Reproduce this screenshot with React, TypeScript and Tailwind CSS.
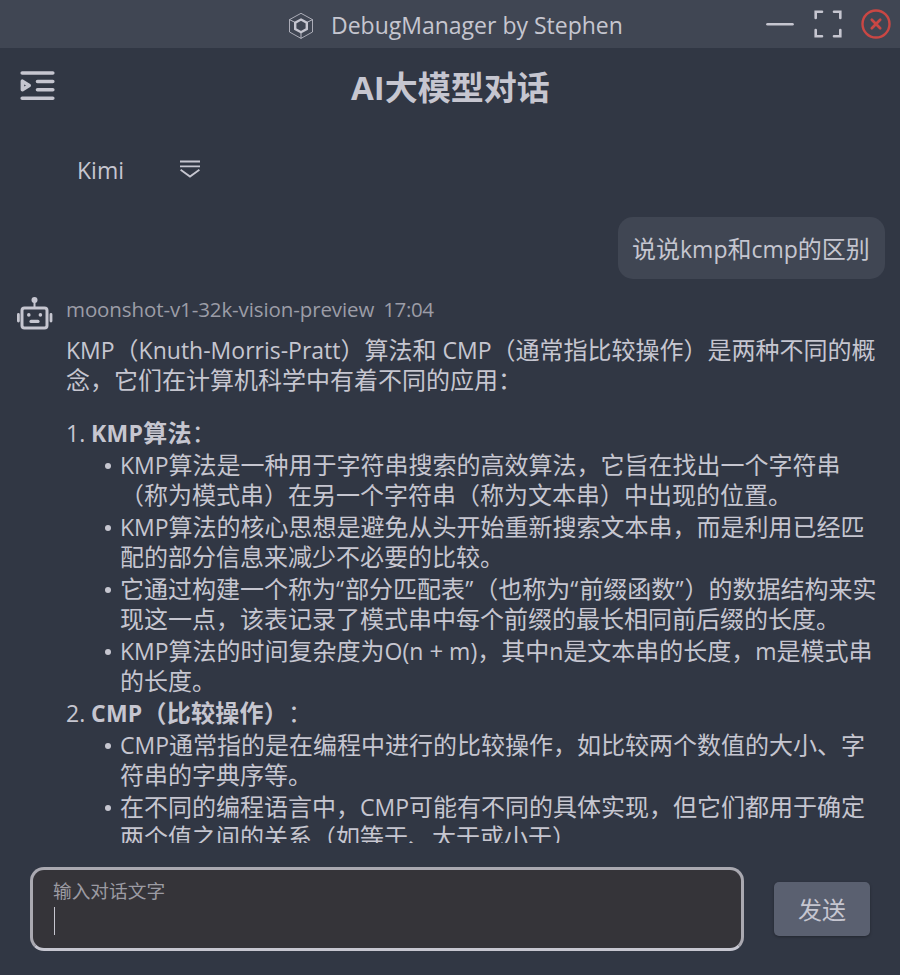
import React from "react";

const RUNS = /( \+ |[\u201c\u201d]|[\x20-\x2a\x2c-\x7e]+)/;

function runClass(part: string) {
  if (part === " + ") return "text-[23px] tracking-[1px] whitespace-pre";
  if (part === "\u201c" || part === "\u201d") return "text-[23px] tracking-[1.1px]";
  return "text-[23px] whitespace-pre";
}

/* Latin runs are set slightly smaller than the Han glyphs around them. */
function Mixed({ text }: { text: string }) {
  return (
    <>
      {text.split(RUNS).map((part, i) =>
        i % 2 === 1 ? (
          <span key={i} className={runClass(part)}>
            {part}
          </span>
        ) : (
          part
        ),
      )}
    </>
  );
}

function Lines({ lines }: { lines: string[] }) {
  return (
    <div>
      {lines.map((line) => (
        <div key={line} className="h-[30px] whitespace-nowrap leading-[28px]">
          <Mixed text={line} />
        </div>
      ))}
    </div>
  );
}

function Bullet({ lines }: { lines: string[] }) {
  return (
    <li className="flex">
      <span className="mt-[12px] mr-[9px] h-[6px] w-[6px] shrink-0 rounded-full bg-[#c6c6d0]" />
      <Lines lines={lines} />
    </li>
  );
}

function Section({ index, title, items }: { index: string; title: string; items: string[][] }) {
  return (
    <li className="flex flex-col gap-[2px]">
      <div className="flex h-[30px] whitespace-nowrap leading-[28px]">
        <span className="w-[25px] text-[23px]">{index}</span>
        <strong className="font-bold tracking-[0.25px]">
          <Mixed text={title} />
        </strong>
        <span>：</span>
      </div>
      <ul className="flex flex-col gap-[2px] pl-[39px]">
        {items.map((lines) => (
          <Bullet key={lines[0]} lines={lines} />
        ))}
      </ul>
    </li>
  );
}

const sections = [
  {
    index: "1.",
    title: "KMP算法",
    items: [
      ["KMP算法是一种用于字符串搜索的高效算法，它旨在找出一个字符串", "（称为模式串）在另一个字符串（称为文本串）中出现的位置。"],
      ["KMP算法的核心思想是避免从头开始重新搜索文本串，而是利用已经匹", "配的部分信息来减少不必要的比较。"],
      ["它通过构建一个称为“部分匹配表”（也称为“前缀函数”）的数据结构来实", "现这一点，该表记录了模式串中每个前缀的最长相同前后缀的长度。"],
      ["KMP算法的时间复杂度为O(n + m)，其中n是文本串的长度，m是模式串", "的长度。"],
    ],
  },
  {
    index: "2.",
    title: "CMP（比较操作）",
    items: [
      ["CMP通常指的是在编程中进行的比较操作，如比较两个数值的大小、字", "符串的字典序等。"],
      ["在不同的编程语言中，CMP可能有不同的具体实现，但它们都用于确定", "两个值之间的关系（如等于、大于或小于）"],
    ],
  },
];

function TitleBar() {
  return (
    <header className="flex h-12 shrink-0 items-center bg-[#404653] pl-[288px]">
      <svg width="26" height="28" viewBox="0 0 26 28" fill="none" stroke="#c6c6d0" className="mt-[3px]">
        <path d="M13 1.3 24.5 7.6V20L13 26.4 1.5 20V7.6Z" strokeWidth="0.8" />
        <path d="M1.5 7.6 7 10.4M24.5 7.6 19 10.4M13 20.5v6" strokeWidth="0.9" />
        <path d="M13 7.5 18.8 10.6V17L13 20.2 7.2 17V10.6Z" strokeWidth="2.4" />
      </svg>
      <h1 className="ml-[17px] mt-[1px] w-[437px] whitespace-nowrap text-[23px] leading-[30px]">DebugManager by Stephen</h1>
      <svg width="28" height="48" viewBox="0 0 28 48" stroke="#c6c6d0" strokeWidth="2.6" strokeLinecap="round" className="-ml-[2px]">
        <path d="M1.5 24.2H26.5" />
      </svg>
      <svg width="28" height="28" viewBox="0 0 28 28" fill="none" stroke="#c6c6d0" strokeWidth="2.6" strokeLinecap="round" className="ml-5">
        <path d="M1.7 8V1.7H8M20 1.7h6.3V8M1.7 20v6.3H8M26.3 20v6.3H20" />
      </svg>
      <svg width="30" height="30" viewBox="0 0 30 30" fill="none" stroke="#c94744" strokeWidth="2.4" strokeLinecap="round" className="ml-[19px]">
        <circle cx="15" cy="15" r="13.5" />
        <path d="m10.8 10.8 8.4 8.4M19.2 10.8l-8.4 8.4" strokeWidth="2.7" />
      </svg>
    </header>
  );
}

function RobotIcon() {
  return (
    <svg width="36" height="34" viewBox="0 0 36 34" fill="none" stroke="#c6c6d0" strokeLinecap="round" className="mt-[0px] shrink-0">
      <rect x="5" y="12" width="25" height="20" rx="2.5" strokeWidth="3" />
      <path d="M17.5 5v6" strokeWidth="2" />
      <circle cx="17.5" cy="4" r="3" fill="#c6c6d0" stroke="none" />
      <path d="M1.4 18.5v6.5M34 18.5v6.5" strokeWidth="2.8" />
      <circle cx="11.8" cy="18.9" r="1.8" fill="#c6c6d0" stroke="none" />
      <circle cx="23.4" cy="18.9" r="1.8" fill="#c6c6d0" stroke="none" />
      <path d="M14 25.4h7" strokeWidth="3.2" />
    </svg>
  );
}

export default function App() {
  return (
    <div className="flex h-[975px] w-[900px] flex-col overflow-hidden bg-[#313744] text-2xl text-[#c6c6d0] [font-family:'Open_Sans','Noto_Sans_CJK_SC',sans-serif] [text-spacing-trim:space-all]">
      <TitleBar />

      <div className="flex h-[80px] shrink-0 items-center pl-5">
        <svg width="35" height="30" viewBox="0 0 35 30" fill="none" stroke="#c6c6d0" strokeWidth="3.6" strokeLinecap="round" strokeLinejoin="round" className="-mt-[5px]">
          <path d="M2.2 2H32.8M17.5 10.5H32.8M17.5 18.8H32.8M2.2 27.3H32.8" />
          <path d="M2.4 10.2V18.8L9.2 14.5Z" />
        </svg>
        <h2 className="ml-[296px] whitespace-nowrap text-[33px] font-bold leading-[44px]">AI大模型对话</h2>
      </div>

      <div className="flex h-[89px] shrink-0 pl-[77px] pt-[27px]">
        <span className="w-[103px] text-[23px] leading-[30px]">Kimi</span>
        <svg width="20" height="19" viewBox="0 0 20 19" fill="none" stroke="#c6c6d0" strokeWidth="1.8" className="mt-[5px]">
          <path d="M0 1.5H20M0 6.4H20M0.6 9.8 10 16.6 19.4 9.8" />
        </svg>
      </div>

      <div className="mr-[15px] flex h-[62px] w-[267px] shrink-0 items-center self-end whitespace-nowrap rounded-[15px] bg-[#404653] pl-[14px] leading-[30px]">
        <div className="mt-[2px]">
          <Mixed text="说说kmp和cmp的区别" />
        </div>
      </div>

      <main className="mt-[17px] flex h-[547px] shrink-0 overflow-hidden pl-[17px]">
        <RobotIcon />
        <div className="ml-[13px]">
          <div className="flex h-[30px] gap-[9px] whitespace-nowrap text-[20.5px] leading-[26px] text-[#9c9da7]">
            <span className="tracking-[-0.1px]">moonshot-v1-32k-vision-preview</span>
            <span className="tracking-[-0.4px]">17:04</span>
          </div>
          <div className="mt-[10px]">
            <Lines lines={["KMP（Knuth-Morris-Pratt）算法和 CMP（通常指比较操作）是两种不同的概", "念，它们在计算机科学中有着不同的应用："]} />
          </div>
          <ol className="mt-[23px] flex flex-col gap-[2px]">
            {sections.map((s) => (
              <Section key={s.index} {...s} />
            ))}
          </ol>
        </div>
      </main>

      <footer className="mt-6 flex items-start pl-[30px]">
        <div className="h-[84px] w-[714px] rounded-[14px] border-[3px] border-[#aaa9b1] border-b-[#c6c6d0] bg-[#353439] pl-[21px] pt-[8px]">
          <div className="-ml-px h-[29px] text-[18.7px] leading-[26px] text-[#9c9ba3]">输入对话文字</div>
          <div className="h-[28px] w-px bg-[#c6c6d0]" />
        </div>
        <button className="ml-[30px] mt-[15px] h-[54px] w-24 rounded-[5px] bg-[#5a6070] pt-px text-2xl shadow-[0_1px_3px_rgba(0,0,0,0.3)]">发送</button>
      </footer>
    </div>
  );
}
